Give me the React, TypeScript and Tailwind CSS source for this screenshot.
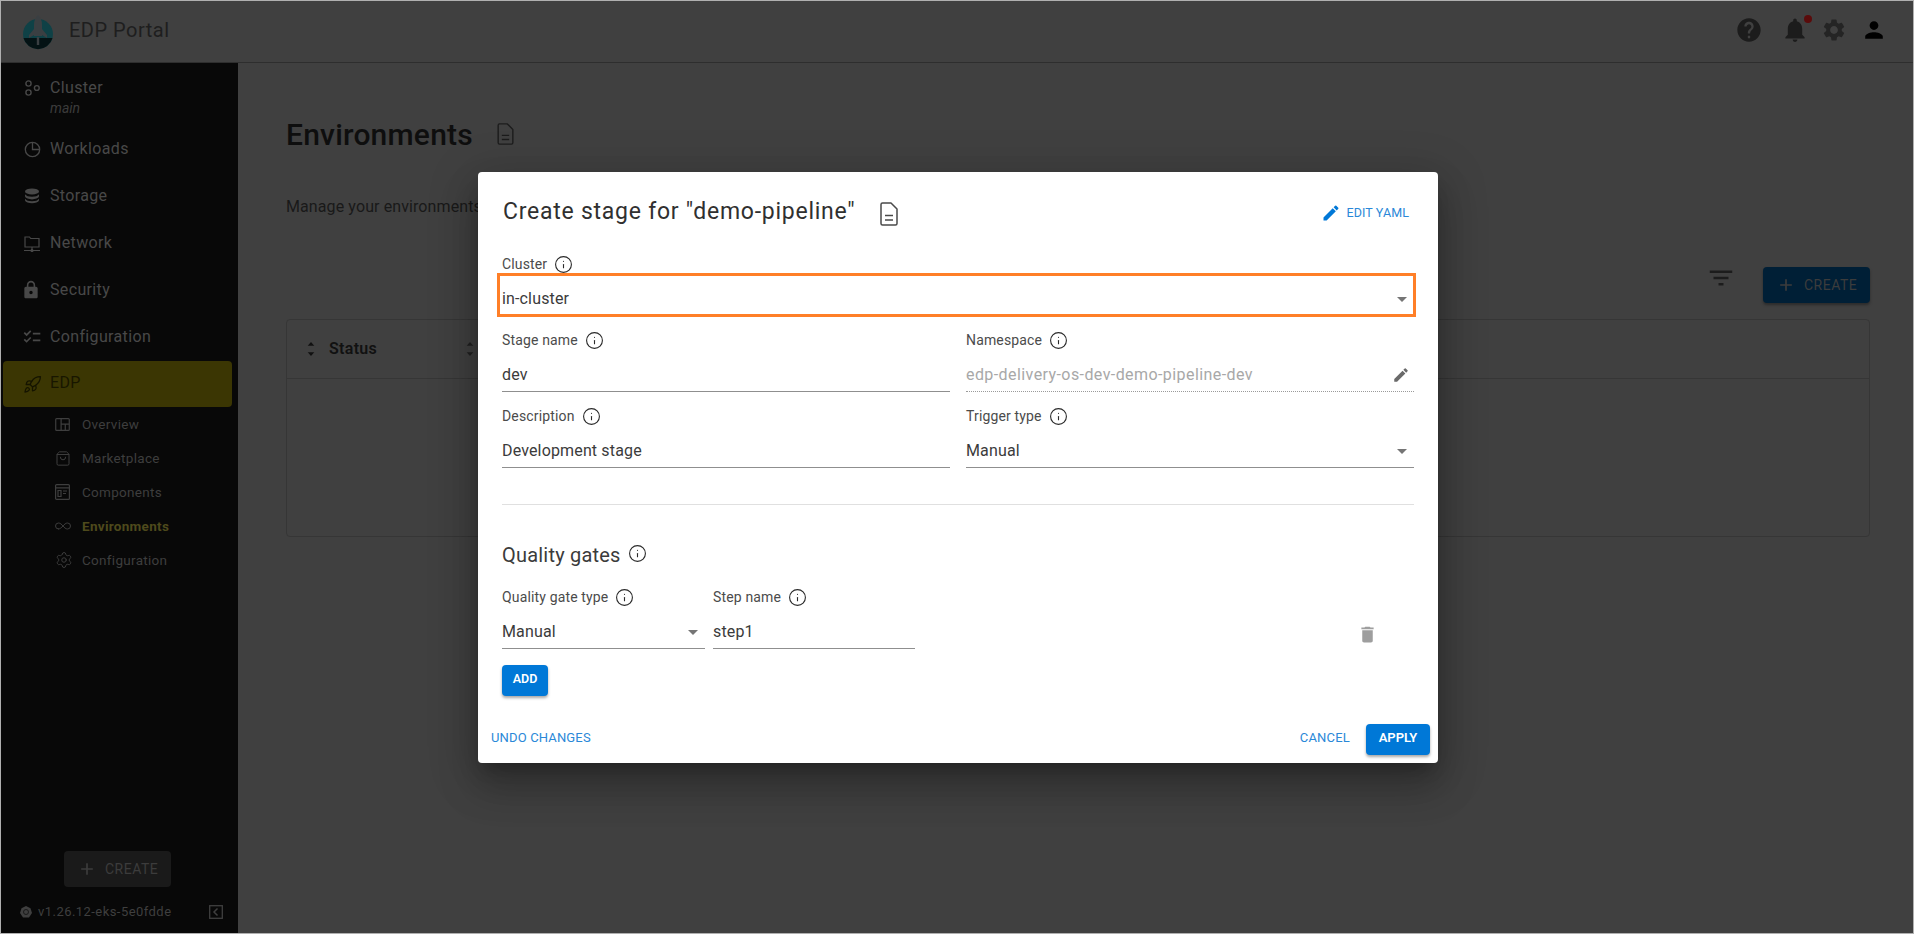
import React from "react";
import { MdHelp, MdNotifications, MdSettings, MdPerson, MdEdit, MdDelete, MdAdd, MdFilterList, MdArrowDropDown, MdLock, MdChecklist } from "react-icons/md";
import { Rocket, Info, Infinity as InfinityIcon, Settings, ShoppingBag } from "lucide-react";

const font = { fontFamily: '"Roboto", "Liberation Sans", sans-serif' };

function ClusterIcon() {
  return (
    <svg viewBox="0 0 16 16" className="h-4 w-4" fill="none" stroke="currentColor" strokeWidth="1.4">
      <circle cx="4.5" cy="3.5" r="2.6" />
      <circle cx="4.5" cy="12.5" r="2.6" />
      <circle cx="12.8" cy="8" r="2.4" />
    </svg>
  );
}
function PieIcon() {
  return (
    <svg viewBox="0 0 18 18" className="h-[17px] w-[17px]" fill="none" stroke="currentColor" strokeWidth="1.4">
      <circle cx="9" cy="9" r="7.6" />
      <path d="M9 1.4V9h7.6" />
    </svg>
  );
}
function DbIcon() {
  return (
    <svg viewBox="0 0 16 16" className="h-4 w-4" fill="currentColor">
      <ellipse cx="8" cy="3.4" rx="7" ry="3" />
      <path d="M1 6.2c1 1.7 3.700 2.500 7 2.500s6-.8 7-2.500v2.400c-.8 1.800-3.700 2.800-7 2.800s-6.200-1-7-2.800z" />
      <path d="M1 10.800c1 1.700 3.700 2.500 7 2.500s6-.8 7-2.500v1.600c-.8 1.800-3.700 2.800-7 2.800s-6.200-1-7-2.800z" />
    </svg>
  );
}
function NetIcon() {
  return (
    <svg viewBox="0 0 16 17" className="h-[17px] w-4" fill="none" stroke="currentColor" strokeWidth="1.2">
      <path d="M1 12V2h4.500l1.200 1.500H15V12z" />
      <path d="M8 12v3M0 15.500h16" />
      <circle cx="8" cy="15.500" r="1" fill="currentColor" />
    </svg>
  );
}
function LayoutIcon() {
  return (
    <svg viewBox="0 0 16 14" className="h-[13px] w-[15px]" fill="none" stroke="currentColor" strokeWidth="1.300">
      <rect x="0.700" y="0.700" width="14.600" height="12.600" rx="1" />
      <path d="M6.500 1v12M6.500 6.500H15M11 6.500V13" />
    </svg>
  );
}
function ComponentsIcon() {
  return (
    <svg viewBox="0 0 15 16" className="h-4 w-[15px]" fill="none" stroke="currentColor" strokeWidth="1.200">
      <rect x="0.600" y="0.600" width="13.800" height="14.800" rx="1" />
      <path d="M1 3.800h13M3 6.500h3v6H3zM8 7h4M8 9.500h3" />
    </svg>
  );
}
function SortIcon() {
  return (
    <svg viewBox="0 0 8 15" className="h-[14px] w-[8px]" fill="currentColor">
      <path d="M4 0l3.500 4h-7zM4 15l3.500-4h-7z" />
    </svg>
  );
}
function DocIcon({ className }: { className: string }) {
  return (
    <svg viewBox="0 0 18 24" className={className} fill="none" stroke="currentColor" strokeWidth="1.500" strokeLinejoin="round">
      <path d="M2.500 1h8.500l6 6v14.500a1.500 1.500 0 0 1-1.500 1.500h-13A1.500 1.500 0 0 1 1 21.500v-19A1.500 1.500 0 0 1 2.500 1z" />
      <path d="M5 13.500h8M5 18h8" />
    </svg>
  );
}
function Logo() {
  return (
    <svg viewBox="0 0 32 36" className="h-[36px] w-[32px]">
      <circle cx="16" cy="20" r="15" fill="#0f4146" />
      <path d="M1.500 24a15 15 0 0 0 29 0z" fill="#041214" />
      <path d="M16 1c3 2.500 4 6 4 10v11h-8V11c0-4 1-7.500 4-10z" fill="#3a3f42" />
      <path d="M12 15l-5 6v3l5-3zM20 15l5 6v3l-5-3z" fill="#3a3f42" />
      <rect x="14.800" y="23" width="2.400" height="8" fill="#3a3f42" />
    </svg>
  );
}
function KubeIcon() {
  return (
    <svg viewBox="0 0 12 12" className="h-3 w-3">
      <path d="M6 0l4.500 2.200L12 7l-3 4.500H3L0 7l1.500-4.800z" fill="#3f3f3f" />
      <circle cx="6" cy="6" r="2.500" fill="none" stroke="#1a1a1a" strokeWidth="1" />
    </svg>
  );
}
function CollapseIcon() {
  return (
    <svg viewBox="0 0 14 14" className="h-[14px] w-[14px]" fill="none" stroke="#3f3f3f" strokeWidth="1.300">
      <rect x="0.700" y="0.700" width="12.600" height="12.600" />
      <path d="M8.500 3.500L5 7l3.500 3.500" strokeWidth="1.500" />
    </svg>
  );
}

function NavItem({ icon, label, sub }: { icon: React.ReactNode; label: string; sub?: string }) {
  return (
    <div className={`flex items-start pl-[23px] text-[#484848] ${sub ? "h-[63px] pt-[15px]" : "h-[47px] pt-[13px]"}`}>
      <div className="flex h-[20px] w-[26px] items-center">{icon}</div>
      <div>
        <div className="text-[16px] leading-[20px] tracking-[0.35px]">{label}</div>
        {sub && <div className="mt-[1px] text-[14px] leading-[18px] italic text-[#3c3c3c]">{sub}</div>}
      </div>
    </div>
  );
}

function SubItem({ icon, label, active }: { icon: React.ReactNode; label: string; active?: boolean }) {
  return (
    <div className={`flex h-[34px] items-center pl-[54px] ${active ? "text-[#4e4a1c]" : "text-[#3e3e3e]"}`}>
      <div className={`flex w-[27px] items-center justify-start ${active ? "text-[#3e3e3e]" : ""}`}>{icon}</div>
      <span className={`text-[13.500px] tracking-[0.3px] ${active ? "font-bold" : ""}`}>{label}</span>
    </div>
  );
}

function Label({ text }: { text: string }) {
  return (
    <div className="flex h-[24px] items-center text-[#4b4b4b]">
      <span className="text-[14px] tracking-[0.15px]">{text}</span>
      <Info className="ml-[7px] h-[19px] w-[19px] text-[#2a2a2a]" strokeWidth={1.400} />
    </div>
  );
}

function Field({
  label,
  value,
  select,
  disabled,
  editable,
}: {
  label: string;
  value: string;
  select?: boolean;
  disabled?: boolean;
  editable?: boolean;
}) {
  return (
    <div className="h-[64px]">
      <Label text={label} />
      <div
        className={`flex h-[40px] items-center justify-between pt-[6px] ${
          disabled ? "border-b border-dotted border-[#9a9a9a]" : "border-b border-[#8f8f8f]"
        }`}
      >
        <span className={`text-[16px] ${disabled ? "tracking-[0.42px] text-[#a8a8a8]" : "tracking-[0.15px] text-[#3b3b3b]"}`}>{value}</span>
        {select && <MdArrowDropDown className="h-[24px] w-[24px] text-[#757575]" />}
        {editable && <MdEdit className="mr-[4px] h-[18px] w-[18px] text-[#6a6a6a]" />}
      </div>
    </div>
  );
}

export default function App() {
  return (
    <div style={font} className="relative h-[934px] w-[1914px] overflow-hidden border border-[#b0b0b0] bg-[#404040]">
      <header className="flex h-[62px] items-center border-b border-[#2e2e2e] pl-[21px] pr-[27px]">
        <Logo />
        <span className="mb-[3px] ml-[15px] text-[20px] tracking-[0.5px] text-[#1e1e1e]">EDP Portal</span>
        <div className="mb-[3px] ml-auto flex items-center text-[#1c1c1c]">
          <MdHelp className="h-[28px] w-[28px]" />
          <div className="relative ml-[20px]">
            <MdNotifications className="h-[24px] w-[24px] scale-[1.200]" />
            <span className="absolute -right-[5px] -top-[3px] h-[8px] w-[8px] rounded-full bg-[#5a0b0b]" />
          </div>
          <MdSettings className="ml-[14px] h-[26px] w-[26px] text-[#242424]" />
          <MdPerson className="ml-[15px] h-[24px] w-[24px] scale-[1.100] text-[#000000]" />
        </div>
      </header>

      <div className="flex h-[870px]">
        <aside className="flex h-full w-[237px] flex-col bg-[#080808]">
          <NavItem icon={<ClusterIcon />} label="Cluster" sub="main" />
          <NavItem icon={<PieIcon />} label="Workloads" />
          <NavItem icon={<DbIcon />} label="Storage" />
          <NavItem icon={<NetIcon />} label="Network" />
          <NavItem icon={<MdLock className="-ml-[3px] h-[20px] w-[20px]" />} label="Security" />
          <NavItem icon={<MdChecklist className="-ml-[2px] h-[20px] w-[20px]" />} label="Configuration" />
          <div className="mx-[2px] flex h-[46px] w-[229px] items-center rounded-[4px] bg-[#3b3603] pl-[20px] text-[#181600]">
            <div className="flex w-[27px] items-center text-[#151400]">
              <Rocket className="h-[19px] w-[19px]" strokeWidth={1.600} />
            </div>
            <span className="mb-[2px] text-[16px] tracking-[0.35px]">EDP</span>
          </div>
          <SubItem icon={<LayoutIcon />} label="Overview" />
          <SubItem icon={<ShoppingBag className="h-[17px] w-[16px]" strokeWidth={1.500} />} label="Marketplace" />
          <SubItem icon={<ComponentsIcon />} label="Components" />
          <SubItem icon={<InfinityIcon className="-ml-[2px] h-[18px] w-[20px]" strokeWidth={1.300} />} label="Environments" active />
          <SubItem icon={<Settings className="h-[18px] w-[18px]" strokeWidth={1.300} />} label="Configuration" />
          <div className="ml-[63px] mt-auto flex h-[36px] w-[107px] items-center rounded-[4px] bg-[#1a1a1a] pl-[13px] text-[#3c3c3c]">
            <MdAdd className="h-[20px] w-[20px]" />
            <span className="ml-[8px] text-[14px] tracking-[0.5px]">CREATE</span>
          </div>
          <div className="mb-[11px] mt-[15px] flex h-[20px] items-center pl-[19px] text-[#3f3f3f]">
            <KubeIcon />
            <span className="ml-[6px] text-[13px] tracking-[0.45px]">v1.26.12-eks-5e0fdde</span>
            <div className="ml-auto mr-[15px]">
              <CollapseIcon />
            </div>
          </div>
        </aside>

        <main className="flex-1 pl-[48px] pr-[43px]">
          <div className="mt-[51px] flex h-[40px] items-center">
            <h1 className="text-[30px] font-medium tracking-[0.2px] text-[#0e0e0e]">Environments</h1>
            <DocIcon className="ml-[24px] h-[22px] w-[17px] text-[#1c1c1c]" />
          </div>
          <p className="mt-[41px] whitespace-nowrap text-[16px] leading-[24px] tracking-[0.1px] text-[#191919]">Manage your environments</p>
          <div className="mt-[48px] flex h-[36px] items-start justify-end">
            <MdFilterList className="mr-[27px] mt-[-4px] h-[30px] w-[30px] text-[#1c1c1c]" />
            <div className="flex h-[36px] w-[107px] items-center rounded-[4px] bg-[#001f36] pl-[13px] text-[#3c3c3c] shadow-[0_2px_3px_rgba(0,0,0,0.35)]">
              <MdAdd className="h-[20px] w-[20px]" />
              <span className="ml-[8px] text-[14px] tracking-[0.5px]">CREATE</span>
            </div>
          </div>
          <div className="mt-[16px] h-[218px] rounded-[4px] border border-[#363636]">
            <div className="flex h-[59px] items-center border-b border-[#363636] pl-[20px] text-[#111111]">
              <SortIcon />
              <span className="ml-[14px] text-[16px] font-semibold tracking-[0.3px]">Status</span>
              <div className="ml-[89px] flex text-[#222222]">
                <SortIcon />
              </div>
            </div>
          </div>
        </main>
      </div>

      <div className="absolute left-[477px] top-[171px] flex h-[591px] w-[960px] flex-col rounded-[4px] bg-white shadow-[0_11px_15px_-7px_rgba(0,0,0,0.25),0_24px_38px_3px_rgba(0,0,0,0.18),0_9px_46px_8px_rgba(0,0,0,0.16)]">
        <div className="flex h-[80px] items-start justify-between pl-[25px] pr-[29px]">
          <div className="flex h-[80px] items-center">
            <h2 className="text-[23px] tracking-[0.75px] text-[#303030]">Create stage for "demo-pipeline"</h2>
            <DocIcon className="ml-[25px] mt-[4px] h-[24px] w-[18px] text-[#4a4a4a]" />
          </div>
          <div className="flex h-[80px] items-center pt-[2px] text-[#0078d7]">
            <MdEdit className="h-[20px] w-[20px]" />
            <span className="ml-[6px] text-[12.500px] tracking-[0.1px] text-[#2a88d8]">EDIT YAML</span>
          </div>
        </div>
        <div className="px-[24px]">
          <div className="relative">
            <Field label="Cluster" value="in-cluster" select />
            <div className="absolute -left-[5px] top-[21px] h-[44px] w-[919px] border-[3px] border-[#ff7f27]" />
          </div>
          <div className="mt-[12px] grid grid-cols-2 gap-x-[16px] gap-y-[12px]">
            <Field label="Stage name" value="dev" />
            <Field label="Namespace" value="edp-delivery-os-dev-demo-pipeline-dev" disabled editable />
            <Field label="Description" value="Development stage" />
            <Field label="Trigger type" value="Manual" select />
          </div>
          <div className="mt-[36px] h-px bg-[#e0e0e0]" />
          <div className="mt-[36px] flex h-[28px] items-center">
            <span className="text-[20px] tracking-[0.2px] text-[#3b3b3b]">Quality gates</span>
            <Info className="mb-[3px] ml-[7px] h-[19px] w-[19px] text-[#2a2a2a]" strokeWidth={1.400} />
          </div>
          <div className="mt-[16px] flex items-start">
            <div className="w-[203px]">
              <Field label="Quality gate type" value="Manual" select />
            </div>
            <div className="ml-[8px] w-[202px]">
              <Field label="Step name" value="step1" />
            </div>
            <MdDelete className="ml-[442px] mt-[39px] h-[21px] w-[21px] text-[#9e9e9e]" />
          </div>
          <div className="mt-[16px] flex h-[31px] w-[46px] items-center justify-center rounded-[4px] bg-[#0078d7] pb-[3px] text-[12.500px] font-semibold text-white shadow-[0_2px_3px_rgba(0,0,0,0.35)]">ADD</div>
        </div>
        <div className="mt-[28px] flex items-center justify-between pl-[13px] pr-[8px] text-[#2a88d8]">
          <span className="mb-[4px] text-[13px] tracking-[0.15px]">UNDO CHANGES</span>
          <div className="flex items-center">
            <span className="mb-[4px] text-[13px] tracking-[0.2px]">CANCEL</span>
            <div className="ml-[16px] flex h-[31px] w-[64px] items-center justify-center rounded-[4px] bg-[#0078d7] pb-[3px] text-[13px] font-semibold text-white shadow-[0_2px_3px_rgba(0,0,0,0.35)]">APPLY</div>
          </div>
        </div>
      </div>
    </div>
  );
}
